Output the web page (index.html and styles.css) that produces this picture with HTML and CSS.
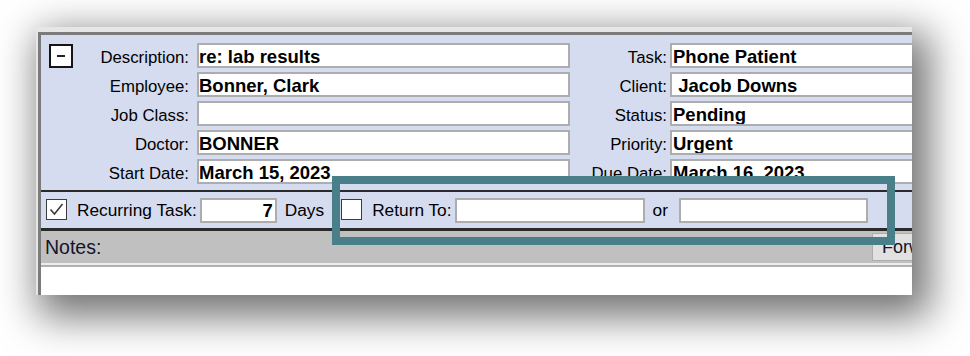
FILE: index.html
```html
<!DOCTYPE html>
<html>
<head>
<meta charset="utf-8">
<link rel="stylesheet" href="styles.css">
</head>
<body>
<div class="stage">
  <div class="panel">
    <div class="frame">
      <div class="top">
        <div class="lab lab1 first"><span class="collapse"><span class="dash"></span></span><span>Description:</span></div>
        <div class="field">re: lab results</div>
        <div class="lab lab2">Task:</div>
        <div class="field wide">Phone Patient</div>

        <div class="lab lab1">Employee:</div>
        <div class="field">Bonner, Clark</div>
        <div class="lab lab2">Client:</div>
        <div class="field wide">&nbsp;Jacob Downs</div>

        <div class="lab lab1">Job Class:</div>
        <div class="field"></div>
        <div class="lab lab2">Status:</div>
        <div class="field wide">Pending</div>

        <div class="lab lab1">Doctor:</div>
        <div class="field">BONNER</div>
        <div class="lab lab2">Priority:</div>
        <div class="field wide">Urgent</div>

        <div class="lab lab1">Start Date:</div>
        <div class="field">March 15, 2023</div>
        <div class="lab lab2">Due Date:</div>
        <div class="field wide">March 16, 2023</div>
      </div>
      <div class="recur">
        <span class="check checked">
          <svg width="19" height="19" viewBox="0 0 19 19"><polyline points="3.5,9.5 7.5,14 15.5,4" fill="none" stroke="#3a3a3a" stroke-width="1.6"/></svg>
        </span>
        <span class="rlabel">Recurring Task:</span>
        <span class="field days">7</span>
        <span class="daystxt">Days</span>
        <span class="check ret"></span>
        <span class="rlabel">Return To:</span>
        <span class="field ret1"></span>
        <span class="or">or</span>
        <span class="field ret2"></span>
      </div>
      <div class="notesbar">
        <span class="notes">Notes:</span>
        <span class="btn">Forward</span>
      </div>
      <div class="notesarea"></div>
    </div>
  </div>
  <div class="highlight"></div>
</div>
</body>
</html>
```
FILE: styles.css
```css
html, body {
  margin: 0;
  padding: 0;
  background: #ffffff;
}
body {
  width: 970px;
  height: 356px;
  overflow: hidden;
  font-family: "Liberation Sans", Arial, sans-serif;
  color: #000;
}
.stage {
  position: relative;
  width: 970px;
  height: 356px;
  padding: 27px 0 0 36px;
  box-sizing: border-box;
}
.panel {
  width: 876px;
  height: 268px;
  box-sizing: border-box;
  padding: 5px 0 0 2px;
  background: #e6e6e6;
  box-shadow: 10px 14px 38px 8px rgba(0, 0, 0, 0.55);
}
.frame {
  height: 100%;
  box-sizing: border-box;
  border-top: 3px solid #7b7b7b;
  border-left: 3px solid #7b7b7b;
  background: #fff;
  overflow: hidden;
  display: flex;
  flex-direction: column;
}
.top {
  background: #d5dcef;
  display: grid;
  grid-template-columns: 156px 373px 100px 320px;
  grid-auto-rows: 25px;
  row-gap: 4px;
  padding: 8px 0 6px 0;
  border-bottom: 2px solid #2a2a2a;
}
.lab {
  font-size: 16.8px;
  display: flex;
  align-items: center;
  justify-content: flex-end;
  white-space: nowrap;
  box-sizing: border-box;
  padding-top: 4px;
}
.lab1 { padding-right: 8px; }
.lab2 { padding-right: 3px; }
.first { justify-content: space-between; }
.collapse {
  align-self: flex-start;
  margin-top: -3px;
  margin-left: 8px;
  width: 24px;
  height: 24px;
  box-sizing: border-box;
  border: 2px solid #151515;
  background: #fff;
  display: flex;
  align-items: center;
  justify-content: center;
}
.dash {
  width: 8px;
  height: 2px;
  background: #222;
}
.field {
  box-sizing: border-box;
  height: 25px;
  border: 2px solid #adadad;
  background: #fff;
  font-weight: bold;
  font-size: 18.5px;
  line-height: 21px;
  padding-top: 1px;
  white-space: nowrap;
  overflow: hidden;
}
.wide { padding-left: 1px; }
.recur {
  background: #d5dcef;
  height: 36px;
  display: flex;
  align-items: center;
  border-bottom: 3px solid #2a2a2a;
  font-size: 17.3px;
  white-space: nowrap;
}
.recur .field {
  padding-top: 0;
}
.check {
  width: 21px;
  height: 21px;
  box-sizing: border-box;
  border: 1.5px solid #3c3c3c;
  background: #fff;
  display: flex;
  align-items: center;
  justify-content: center;
  margin-top: -2px;
}
.checked { margin-left: 5px; margin-right: 10px; }
.rlabel { margin-right: 3px; }
.days {
  width: 77px;
  text-align: right;
  padding-right: 2px;
  margin-right: 8px;
}
.daystxt { margin-right: 17px; }
.ret { margin-right: 10px; }
.ret1 { width: 190px; margin-left: 0; margin-right: 8px; }
.or { margin-right: 11px; }
.ret2 { width: 189px; }
.notesbar {
  height: 32px;
  background: #c0c0c0;
  display: flex;
  align-items: center;
  border-bottom: 2px solid #ececec;
  white-space: nowrap;
}
.notes {
  font-size: 19.5px;
  width: 827px;
  padding-left: 4px;
  color: #14142a;
  flex: none;
}
.btn {
  flex: none;
  height: 28px;
  box-sizing: border-box;
  border: 1px solid #adadad;
  background: #e1e1e1;
  font-size: 18px;
  line-height: 26px;
  padding: 0 12px 0 9px;
  color: #14142a;
}
.notesarea {
  flex: 1;
  background: #fff;
  border-top: 2px solid #b0b0b0;
}
.highlight {
  position: absolute;
  left: 332px;
  top: 176px;
  width: 563px;
  height: 69px;
  box-sizing: border-box;
  border: 8px solid #487f89;
}
```
